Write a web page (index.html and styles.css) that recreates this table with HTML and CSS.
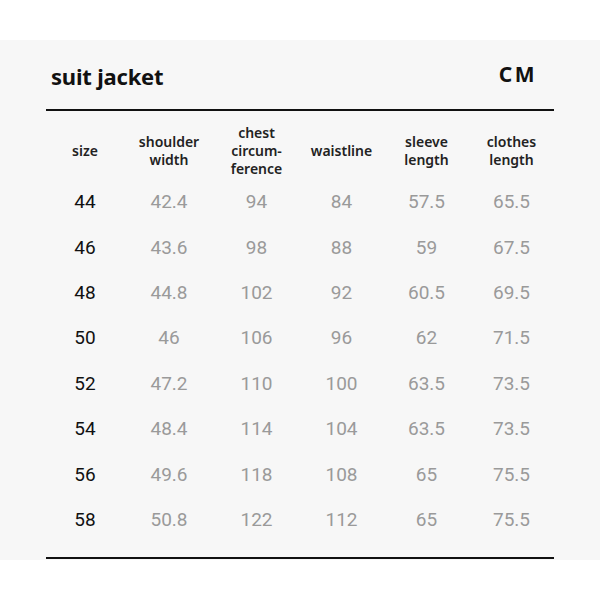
FILE: index.html
```html
<!DOCTYPE html>
<html>
<head>
<meta charset="utf-8">
<link rel="stylesheet" href="styles.css">
</head>
<body>
<div class="panel">
  <div class="inner">
    <div class="title-row">
      <span class="title">suit jacket</span>
      <span class="unit">CM</span>
    </div>
    <div class="table">
      <div class="row head">
        <div>size</div>
        <div>shoulder<br>width</div>
        <div>chest<br>circum-<br>ference</div>
        <div>waistline</div>
        <div>sleeve<br>length</div>
        <div>clothes<br>length</div>
      </div>
      <div class="row"><div class="sz">44</div><div>42.4</div><div>94</div><div>84</div><div>57.5</div><div>65.5</div></div>
      <div class="row"><div class="sz">46</div><div>43.6</div><div>98</div><div>88</div><div>59</div><div>67.5</div></div>
      <div class="row"><div class="sz">48</div><div>44.8</div><div>102</div><div>92</div><div>60.5</div><div>69.5</div></div>
      <div class="row"><div class="sz">50</div><div>46</div><div>106</div><div>96</div><div>62</div><div>71.5</div></div>
      <div class="row"><div class="sz">52</div><div>47.2</div><div>110</div><div>100</div><div>63.5</div><div>73.5</div></div>
      <div class="row"><div class="sz">54</div><div>48.4</div><div>114</div><div>104</div><div>63.5</div><div>73.5</div></div>
      <div class="row"><div class="sz">56</div><div>49.6</div><div>118</div><div>108</div><div>65</div><div>75.5</div></div>
      <div class="row"><div class="sz">58</div><div>50.8</div><div>122</div><div>112</div><div>65</div><div>75.5</div></div>
    </div>
    <div class="bottom-line"></div>
  </div>
</div>
</body>
</html>
```
FILE: styles.css
```css
html, body {
  margin: 0;
  padding: 0;
  background: #ffffff;
}
body {
  font-family: "Noto Sans", "DejaVu Sans", sans-serif;
}
.panel {
  margin-top: 40px;
  height: 520px;
  background: #f7f7f7;
}
.inner {
  padding: 0 46px;
}
.title-row {
  height: 69px;
  display: flex;
  align-items: center;
  justify-content: space-between;
  border-bottom: 2px solid #111;
  padding: 0 17px 0 5px;
}
.title {
  font-size: 22px;
  font-weight: 700;
  color: #111;
  letter-spacing: -0.2px;
  padding-top: 3px;
}
.unit {
  font-size: 21px;
  font-weight: 700;
  color: #111;
  letter-spacing: 2.5px;
  padding-bottom: 2px;
}
.row {
  display: grid;
  grid-template-columns: 78px 90px 85px 85px 85px 85px;
  height: 45.4px;
  align-items: center;
  text-align: center;
}
.row > div {
  font-family: "Roboto", "Noto Sans", sans-serif;
  font-size: 19px;
  color: #9a9a9a;
}
.row > div.sz {
  color: #111;
}
.row.head {
  height: 56px;
  padding-top: 12px;
}
.row.head > div {
  font-family: "Noto Sans", "DejaVu Sans", sans-serif;
  font-size: 14px;
  font-weight: 600;
  line-height: 18px;
  color: #222;
}
.bottom-line {
  margin-top: 15px;
  height: 2px;
  background: #111;
}
```
